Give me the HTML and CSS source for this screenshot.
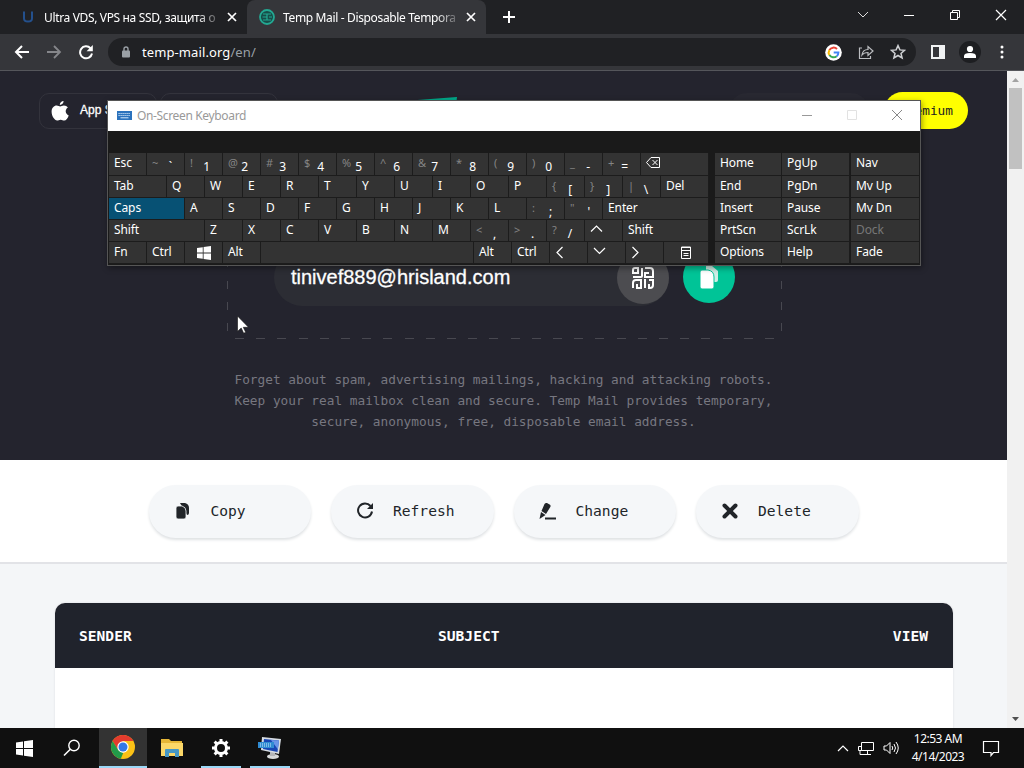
FILE: index.html
```html
<!DOCTYPE html>
<html lang="en">
<head>
	<meta charset="utf-8">
	<title>Temp Mail - Disposable Temporary Email</title>
	<link rel="stylesheet" href="styles.css">
</head>
<body>
	<div class="tabs">
		<div class="tab">
			<svg class="favicon" width="16" height="16" viewBox="0 0 16 16"><path d="M4 2.500v7q0 3 4 3t4-3v-7" fill="none" stroke="#24508c" stroke-width="2"/></svg>
			<span class="tab-title">Ultra VDS, VPS на SSD, защита о</span>
			<svg class="tab-close" width="10" height="10" viewBox="0 0 10 10"><path d="M1 1l8 8M9 1l-8 8" stroke="#fff" stroke-width="1.700"/></svg>
		</div>
		<div class="tab active">
			<svg class="favicon" width="16" height="16" viewBox="0 0 16 16"><circle cx="8" cy="8" r="7" fill="#174d49" stroke="#23a892" stroke-width="1.800"/><path d="M4 5h8M3.500 8H8M4 11h8M8 5v6M10 8h3" stroke="#23a892" stroke-width="1.200"/></svg>
			<span class="tab-title">Temp Mail - Disposable Tempora</span>
			<svg class="tab-close" width="10" height="10" viewBox="0 0 10 10"><path d="M1 1l8 8M9 1l-8 8" stroke="#fff" stroke-width="1.700"/></svg>
		</div>
		<svg class="new-tab" width="12" height="12" viewBox="0 0 12 12"><path d="M6 0v12M0 6h12" stroke="#fff" stroke-width="2"/></svg>
		<div class="window-buttons">
			<svg width="12" height="12" viewBox="0 0 12 12"><path d="M1 3l5 5 5-5" fill="none" stroke="#ddd"/></svg>
			<svg width="12" height="12" viewBox="0 0 12 12"><path d="M1 6.500h10" stroke="#fff"/></svg>
			<svg width="12" height="12" viewBox="0 0 12 12"><path d="M1.500 3.500h7v7h-7zM3.500 3.500v-2h7v7h-2" fill="none" stroke="#fff"/></svg>
			<svg width="12" height="12" viewBox="0 0 12 12"><path d="M1 1l10 10M11 1L1 11" stroke="#fff" stroke-width="1.200"/></svg>
		</div>
	</div>

	<div class="toolbar">
		<svg width="16" height="16" viewBox="0 0 16 16"><path d="M15 8H2M8 2L2 8l6 6" fill="none" stroke="#fff" stroke-width="2"/></svg>
		<svg width="16" height="16" viewBox="0 0 16 16"><path d="M1 8h13M8 2l6 6-6 6" fill="none" stroke="#85868a" stroke-width="1.800"/></svg>
		<svg width="16" height="16" viewBox="0 0 16 16"><path d="M12.500 4.200A6 6 0 1 0 14 9.500" fill="none" stroke="#fff" stroke-width="2"/><path d="M14.800 1v6.200H8.600z" fill="#fff"/></svg>
		<div class="address">
			<svg width="10" height="12" viewBox="0 0 10 12"><path d="M3 5V3a2 2 0 0 1 4 0v2" fill="none" stroke="#9aa0a6" stroke-width="1.400"/><rect x="1" y="4.500" width="8" height="7" rx="1" fill="#9aa0a6"/></svg>
			<span class="url">temp-mail.org<span>/en/</span></span>
			<svg width="17" height="17" viewBox="0 0 17 17"><circle cx="8.500" cy="8.500" r="8.300" fill="#fff"/><g fill="none" stroke-width="2"><path d="M12 5a4.900 4.900 0 0 0-7.600 1" stroke="#ea4335"/><path d="M4.400 6a5 5 0 0 0 0 5" stroke="#fbbc05"/><path d="M4.400 11a4.900 4.900 0 0 0 7.300 1.200" stroke="#34a853"/><path d="M11.700 12.200a4.900 4.900 0 0 0 1.700-3.700H8.700" stroke="#4285f4"/></g></svg>
			<svg width="16" height="16" viewBox="0 0 16 16"><path d="M4 4H1.500v10.500h11V12M4 11c.5-4 2.500-5.500 6-5.500V2.500L15 7l-5 4.500v-3C7.500 8.500 5.500 9 4 11z" fill="none" stroke="#bcbec1" stroke-width="1.200"/></svg>
			<svg width="16" height="16" viewBox="0 0 16 16"><path d="M8 1.600l1.900 4.300 4.600.4-3.500 3.100 1.100 4.600L8 11.500 3.900 14 5 9.400 1.500 6.300l4.600-.4z" fill="none" stroke="#cfd1d4" stroke-width="1.500"/></svg>
		</div>
		<div class="toolbar-right">
			<svg width="14" height="14" viewBox="0 0 14 14"><path d="M1 1h12v12H1z" fill="none" stroke="#f1f3f4" stroke-width="2"/><path d="M8 1h5v12H8z" fill="#f1f3f4"/></svg>
			<svg width="22" height="22" viewBox="0 0 22 22"><circle cx="11" cy="11" r="11" fill="#1d1e21"/><circle cx="11" cy="8" r="3.100" fill="#fff"/><path d="M5 17v-2q0-3 6-3t6 3v2z" fill="#fff"/></svg>
			<svg width="4" height="14" viewBox="0 0 4 14"><g fill="#fff"><circle cx="2" cy="2" r="1.500"/><circle cx="2" cy="7" r="1.500"/><circle cx="2" cy="12" r="1.500"/></g></svg>
		</div>
	</div>

	<div class="viewport">
		<div class="page">
			<div class="hero">
				<div class="site-header">
					<div class="store">
						<svg width="18" height="22" viewBox="0 0 18 22"><path d="M12.600 1c.1 2.200-1.800 4-3.800 3.900C8.600 2.900 10.600 1.100 12.600 1zM9.200 6.400c1 0 2-.9 3.700-.9 1.600 0 3.100.8 4 2.100-3.300 2-2.700 6.500.8 7.800-.9 2.700-2.600 5.200-4.500 5.200-1.400 0-1.900-.8-3.600-.8-1.600 0-2.200.8-3.500.8C3.700 20.600.6 16 .6 11.800c0-3.900 2.500-6.200 5-6.200 1.600 0 2.700.8 3.600.8z" fill="#fff"/></svg>
						<span>App Store</span>
					</div>
					<div class="store"></div>
					<svg class="logo" width="70" height="38" viewBox="0 0 70 38"><path d="M0 9L66 4l-2 18L0 32z" fill="#00a98a"/></svg>
					<div class="language"></div>
					<div class="premium">Premium</div>
				</div>
				<div class="mailbox">
					<div class="email">
						<span>tinivef889@hrisland.com</span>
						<div class="round">
							<svg width="24" height="24" viewBox="0 0 24 24"><path d="M11 2v8q0 1-1 1H2M2 7V4q0-2 2-2h3v5zM14 2h5q3 0 3 3v6h-8V7h4M2 22v-5q0-3 3-3h5v8H6v-4M14 13v9M18 14h4v5q0 3-3 3h-1v-4" fill="none" stroke="#fff" stroke-width="2"/></svg>
						</div>
					</div>
					<div class="round green">
						<svg width="20" height="24" viewBox="0 0 20 24"><path d="M7 1h6l6 5v9q0 2-2 2H7z" fill="#cfeee6"/><path d="M3 5h6q6 1 6 7v10q0 2-2 2H3q-2 0-2-2V7q0-2 2-2z" fill="#fff" stroke="#00c497"/></svg>
					</div>
				</div>
				<p class="intro">Forget about spam, advertising mailings, hacking and attacking robots. Keep your real mailbox clean and secure. Temp Mail provides temporary, secure, anonymous, free, disposable email address.</p>
			</div>

			<div class="actions">
				<div class="action">
					<svg width="18" height="18" viewBox="0 0 18 18"><path d="M6 1h5q4 1 4 5v5q0 2-2 2z" fill="#212529"/><path d="M4 4h4q4 1 4 5v6q0 2-2 2H4q-2 0-2-2V6q0-2 2-2z" fill="#212529" stroke="#f5f8fa" stroke-width=".8"/></svg>
					Copy
				</div>
				<div class="action">
					<svg width="18" height="18" viewBox="0 0 18 18"><path d="M14.500 4A7 7 0 1 0 16 9.500" fill="none" stroke="#212529" stroke-width="2"/><path d="M17 1v6h-6z" fill="#212529"/></svg>
					Refresh
				</div>
				<div class="action">
					<svg width="18" height="18" viewBox="0 0 18 18"><path d="M5.500 2q1-1.500 2.500-1l3 1.700q1 1 .3 2.300L7 12l-4.500-3zM2 10l4.500 3L.500 17z" fill="#212529"/><path d="M6 16.500h11" stroke="#212529" stroke-width="2"/></svg>
					Change
				</div>
				<div class="action">
					<svg width="18" height="18" viewBox="0 0 18 18"><path d="M3.500 3.500l11 11M14.500 3.500l-11 11" stroke="#212529" stroke-width="4" stroke-linecap="round"/></svg>
					Delete
				</div>
			</div>

			<div class="inbox-wrap">
				<div class="inbox">
					<div class="inbox-head"><span>SENDER</span><span>SUBJECT</span><span>VIEW</span></div>
				</div>
			</div>
		</div>
		<div class="scrollbar">
			<svg width="9" height="17" viewBox="0 0 9 17"><path d="M1 11l3.500-4L8 11z" fill="#a3a3a3"/></svg>
			<div class="thumb"></div>
			<svg width="9" height="17" viewBox="0 0 9 17"><path d="M1 6l3.500 4L8 6z" fill="#505050"/></svg>
		</div>
	</div>

	<div class="taskbar">
		<div class="task"><svg width="17" height="17" viewBox="0 0 17 17"><path d="M0 2.500l7-1V8H0zM8 1.300L17 0v8H8zM0 9h7v6.500l-7-1zM8 9h9v8l-9-1.300z" fill="#fff"/></svg></div>
		<div class="task"><svg width="18" height="18" viewBox="0 0 18 18"><circle cx="11" cy="6.500" r="5.200" fill="none" stroke="#fff" stroke-width="1.400"/><path d="M7.300 10.200L1 16.500" stroke="#fff" stroke-width="1.600"/></svg></div>
		<div class="task current"><svg width="24" height="24" viewBox="0 0 24 24"><circle cx="12" cy="12" r="12" fill="#fbc116"/><path d="M1.600 6A12 12 0 0 1 22.400 6H12L7 15z" fill="#e33b2e"/><path d="M1.600 6l5.600 9 5 3-2.400 5.800A12 12 0 0 1 1.600 6z" fill="#229a4a"/><circle cx="12" cy="12" r="5.700" fill="#fff"/><circle cx="12" cy="12" r="4.500" fill="#3478e5"/></svg></div>
		<div class="task"><svg width="22" height="20" viewBox="0 0 22 20"><path d="M0 1h8l2 2h11v15H0z" fill="#e6b637"/><path d="M0 5h22v13H0z" fill="#fbd768"/><path d="M4 19v-7q0-1 1-1h12q1 0 1 1v7h-4v-4H8v4z" fill="#4697c4"/></svg></div>
		<div class="task open"><svg width="20" height="20" viewBox="0 0 20 20"><circle cx="10" cy="10" r="5.500" fill="none" stroke="#fff" stroke-width="3"/><path d="M10 1v3M10 16v3M1 10h3M16 10h3M3.600 3.600l2.200 2.200M14.200 14.200l2.200 2.200M3.600 16.400l2.200-2.200M14.200 5.800l2.200-2.200" stroke="#fff" stroke-width="3"/></svg></div>
		<div class="task open"><svg width="26" height="24" viewBox="0 0 26 24"><ellipse cx="16" cy="20.500" rx="6" ry="2.500" fill="#d7d9da"/><path d="M13 16h5v4h-5z" fill="#b3b5b8"/><path d="M5 1l19 2-2 15L4 14z" fill="#d6dce3"/><path d="M7 3l15 1.500-1.500 11.500L6 13z" fill="#1846b4"/><path d="M14 4l8 .5-1 9z" fill="#6a95e8"/><path d="M1 6h16v6H1z" fill="#2f8bd2"/><path d="M3 8h12M3 10h12" stroke="#cce8fa" stroke-dasharray="1 1"/></svg></div>
		<div class="tray">
			<svg width="12" height="12" viewBox="0 0 12 12"><path d="M1 9l5-5 5 5" fill="none" stroke="#fff" stroke-width="1.200"/></svg>
			<svg width="18" height="16" viewBox="0 0 18 16"><path d="M4.500 2.500h12v8h-12zM7 14.500h7M10.500 10.500v4M1.500 6.500h3v4h-3zM3 10.500v4h5" fill="none" stroke="#fff"/></svg>
			<svg width="16" height="16" viewBox="0 0 16 16"><path d="M1 6h2.500L7 2.500v11L3.500 10H1z" fill="none" stroke="#fff"/><path d="M9 6q1.500 2 0 4M11 4q3 4 0 8M13 2q4.500 6 0 12" fill="none" stroke="#fff"/></svg>
			<div class="clock">12:53 AM<br>4/14/2023</div>
			<svg width="18" height="18" viewBox="0 0 18 18"><path d="M1.500 2.500h15v11h-5l-2.500 3v-3H1.500z" fill="none" stroke="#fff" stroke-width="1.200"/></svg>
		</div>
	</div>

	<div class="osk">
		<div class="osk-title">
			<svg width="15" height="9" viewBox="0 0 15 9"><path d="M0 0h15v9H0z" fill="#2c73bd"/><path d="M1.500 2.500h12M1.500 4.500h12" stroke="#d4e8fa" stroke-dasharray="1.200 .8"/><path d="M3.500 6.800h8" stroke="#d4e8fa"/></svg>
			<span>On-Screen Keyboard</span>
			<svg width="12" height="12" viewBox="0 0 12 12"><path d="M1 6.500h10" stroke="#999"/></svg>
			<svg width="12" height="12" viewBox="0 0 12 12"><path d="M1.500 1.500h9v9h-9z" fill="none" stroke="#e2e2e2"/></svg>
			<svg width="12" height="12" viewBox="0 0 12 12"><path d="M1 1l10 10M11 1L1 11" stroke="#888"/></svg>
		</div>
		<div class="osk-body">
			<div class="keys">
				<div class="row row1">
					<div class="key">Esc</div>
					<div class="key two"><i>~</i><b>`</b></div>
					<div class="key two"><i>!</i><b>1</b></div>
					<div class="key two"><i>@</i><b>2</b></div>
					<div class="key two"><i>#</i><b>3</b></div>
					<div class="key two"><i>$</i><b>4</b></div>
					<div class="key two"><i>%</i><b>5</b></div>
					<div class="key two"><i>^</i><b>6</b></div>
					<div class="key two"><i>&amp;</i><b>7</b></div>
					<div class="key two"><i>*</i><b>8</b></div>
					<div class="key two"><i>(</i><b>9</b></div>
					<div class="key two"><i>)</i><b>0</b></div>
					<div class="key two"><i>_</i><b>-</b></div>
					<div class="key two"><i>+</i><b>=</b></div>
					<div class="key"><svg width="14" height="11" viewBox="0 0 14 11"><path d="M5 .500h8.500v10H5l-4.500-5zM6.500 3l5 5M11.500 3l-5 5" fill="none" stroke="#fff"/></svg></div>
				</div>
				<div class="row row2">
					<div class="key">Tab</div>
					<div class="key">Q</div><div class="key">W</div><div class="key">E</div><div class="key">R</div><div class="key">T</div>
					<div class="key">Y</div><div class="key">U</div><div class="key">I</div><div class="key">O</div><div class="key">P</div>
					<div class="key two"><i>{</i><b>[</b></div>
					<div class="key two"><i>}</i><b>]</b></div>
					<div class="key two"><i>|</i><b>\</b></div>
					<div class="key">Del</div>
				</div>
				<div class="row row3">
					<div class="key pressed">Caps</div>
					<div class="key">A</div><div class="key">S</div><div class="key">D</div><div class="key">F</div><div class="key">G</div>
					<div class="key">H</div><div class="key">J</div><div class="key">K</div><div class="key">L</div>
					<div class="key two"><i>:</i><b>;</b></div>
					<div class="key two"><i>"</i><b>'</b></div>
					<div class="key">Enter</div>
				</div>
				<div class="row row4">
					<div class="key">Shift</div>
					<div class="key">Z</div><div class="key">X</div><div class="key">C</div><div class="key">V</div><div class="key">B</div>
					<div class="key">N</div><div class="key">M</div>
					<div class="key two"><i>&lt;</i><b>,</b></div>
					<div class="key two"><i>&gt;</i><b>.</b></div>
					<div class="key two"><i>?</i><b>/</b></div>
					<div class="key"><svg width="13" height="11" viewBox="0 0 13 11"><path d="M1 7.500l5.500-5.500L12 7.500" fill="none" stroke="#fff" stroke-width="1.200"/></svg></div>
					<div class="key">Shift</div>
				</div>
				<div class="row row5">
					<div class="key">Fn</div>
					<div class="key">Ctrl</div>
					<div class="key center"><svg width="14" height="14" viewBox="0 0 17 17"><path d="M0 2.500l7-1V8H0zM8 1.300L17 0v8H8zM0 9h7v6.500l-7-1zM8 9h9v8l-9-1.300z" fill="#fff"/></svg></div>
					<div class="key">Alt</div>
					<div class="key"></div>
					<div class="key">Alt</div>
					<div class="key">Ctrl</div>
					<div class="key"><svg width="13" height="13" viewBox="0 0 13 13"><path d="M7.500 1L2 6.500 7.500 12" fill="none" stroke="#fff" stroke-width="1.200"/></svg></div>
					<div class="key"><svg width="13" height="11" viewBox="0 0 13 11"><path d="M1 2l5.500 5.500L12 2" fill="none" stroke="#fff" stroke-width="1.200"/></svg></div>
					<div class="key"><svg width="13" height="13" viewBox="0 0 13 13"><path d="M1.500 1L7 6.500 1.500 12" fill="none" stroke="#fff" stroke-width="1.200"/></svg></div>
					<div class="key center"><svg width="10" height="13" viewBox="0 0 10 13"><path d="M.500 1v11.500h9V1zM0 1.500h10M0 4.500h10M2.500 7.500h5M2.500 9.500h5" fill="none" stroke="#fff"/></svg></div>
				</div>
			</div>
			<div class="side">
				<div class="key">Home</div><div class="key">PgUp</div><div class="key">Nav</div>
				<div class="key">End</div><div class="key">PgDn</div><div class="key">Mv Up</div>
				<div class="key">Insert</div><div class="key">Pause</div><div class="key">Mv Dn</div>
				<div class="key">PrtScn</div><div class="key">ScrLk</div><div class="key off">Dock</div>
				<div class="key">Options</div><div class="key">Help</div><div class="key">Fade</div>
			</div>
		</div>
	</div>

	<svg class="cursor" width="12" height="19" viewBox="0 0 12 19"><path d="M.500 1v15.500l3.700-3.500 2.500 5.300 2-1-2.400-5h5.200z" fill="#fff" stroke="#111" stroke-width=".6"/></svg>
</body>
</html>
```
FILE: styles.css
```css
* {
	box-sizing: border-box;
}
body {
	margin: 0;
	width: 1024px;
	height: 768px;
	overflow: hidden;
	display: flex;
	flex-direction: column;
	position: relative;
	background: #202124;
	color: #fff;
	font-family: "Noto Sans", sans-serif;
	font-size: 12px;
}
svg {
	display: block;
	flex: none;
}

/* browser */
.tabs {
	height: 34px;
	display: flex;
	align-items: center;
	padding-left: 8px;
}
.tab {
	width: 239px;
	height: 34px;
	display: flex;
	align-items: center;
	padding: 0 10px 0 12px;
}
.tab.active {
	background: #35363a;
	border-radius: 8px 8px 0 0;
}
.tab-title {
	flex: 1;
	margin: 0 9px 0 8px;
	white-space: nowrap;
	letter-spacing: -0.35px;
	-webkit-mask-image: linear-gradient(90deg, #000 88%, rgba(0, 0, 0, 0.2));
	mask-image: linear-gradient(90deg, #000 88%, rgba(0, 0, 0, 0.2));
}
.new-tab {
	margin-left: 17px;
}
.window-buttons {
	display: flex;
	gap: 34px;
	margin: -5px 17px 0 auto;
}
.toolbar {
	height: 37px;
	display: flex;
	align-items: center;
	gap: 16px;
	padding: 0 20px 0 14px;
	background: #35363a;
	border-bottom: 1px solid #55565b;
}
.address {
	width: 808px;
	height: 28px;
	flex: none;
	margin-left: -2px;
	display: flex;
	align-items: center;
	gap: 16px;
	padding: 0 10px 0 13px;
	border-radius: 14px;
	background: #202124;
}
.toolbar-right {
	display: flex;
	align-items: center;
	gap: 14px;
	margin-left: -1px;
}
.toolbar-right svg:last-child {
	margin-left: 5px;
}
.url {
	flex: 1;
	margin-left: -5px;
	font-size: 13px;
	letter-spacing: 0.1px;
}
.url span {
	color: #9aa0a6;
}
.viewport {
	height: 657px;
	display: flex;
}
.page {
	width: 1007px;
	background: #f4f6f8;
	overflow: hidden;
}
.scrollbar {
	width: 17px;
	display: flex;
	flex-direction: column;
	align-items: center;
	background: #f1f1f1;
}
.thumb {
	width: 13px;
	height: 81px;
	margin-bottom: auto;
	background: #c1c1c1;
}

/* hero */
.hero {
	height: 389px;
	background: #24242e;
}
.site-header {
	display: flex;
	align-items: flex-start;
	padding: 22px 39px 0;
}
.store {
	width: 118px;
	height: 36px;
	display: flex;
	align-items: center;
	gap: 11px;
	padding-left: 11px;
	border: 1px solid #33333c;
	border-radius: 10px;
	font-family: "Liberation Sans", sans-serif;
	-webkit-text-stroke: 0.3px #fff;
	white-space: nowrap;
	overflow: hidden;
}
.store span {
	margin-top: -2px;
}
.store + .store {
	margin-left: 3px;
}
.logo {
	margin-left: 113px;
}
.language {
	width: 140px;
	height: 36px;
	margin-left: auto;
	margin-right: 15px;
	border-radius: 18px;
	background: #282831;
}
.premium {
	width: 84px;
	height: 37px;
	margin-top: -1px;
	padding-right: 15px;
	border-radius: 19px;
	background: #ff0;
	color: #222;
	font: 12.800px/37px "DejaVu Sans Mono", monospace;
	text-align: right;
}
.mailbox {
	width: 555px;
	height: 138px;
	margin: 70px 0 0 227px;
	display: flex;
	align-items: flex-start;
	gap: 14px;
	padding: 48px 46px 0 47px;
	background:
		repeating-linear-gradient(90deg, transparent 0 8px, #484850 8px 17px, transparent 17px 21.200px) 0 100% / 100% 1px no-repeat,
		repeating-linear-gradient(0deg, transparent 0 8px, #484850 8px 16px, transparent 16px 21.200px) 0 0 / 1px 100% no-repeat,
		repeating-linear-gradient(0deg, transparent 0 8px, #484850 8px 16px, transparent 16px 21.200px) 100% 0 / 1px 100% no-repeat;
}
.email {
	width: 395px;
	height: 57px;
	display: flex;
	align-items: center;
	justify-content: space-between;
	padding-left: 17px;
	border-radius: 29px;
	background: #2c2d34;
	font: 20px "Liberation Sans", sans-serif;
	-webkit-text-stroke: 0.3px #fff;
}
.round {
	width: 52px;
	height: 52px;
	flex: none;
	display: flex;
	align-items: center;
	justify-content: center;
	border-radius: 50%;
	background: #4c4c50;
}
.round.green {
	margin-top: 2px;
	background: #00c497;
}
.intro {
	width: 560px;
	margin: 30px auto 0;
	color: #777780;
	font: 12.780px/21px "DejaVu Sans Mono", monospace;
	text-align: center;
}

/* actions */
.actions {
	height: 104px;
	display: flex;
	justify-content: center;
	gap: 20px;
	padding-top: 25px;
	background: #fff;
	border-bottom: 2px solid #e2e3e7;
}
.action {
	width: 162.500px;
	height: 53px;
	display: flex;
	align-items: center;
	gap: 19px;
	padding: 0 0 2px 25px;
	border-radius: 27px;
	background: #f5f7f9;
	box-shadow: 0 2px 3px #dfe2e4;
	color: #212529;
	font: 14.600px "DejaVu Sans Mono", monospace;
}
.inbox-wrap {
	padding: 39px 54px 0 55px;
}
.inbox {
	height: 140px;
	background: #fff;
	border-radius: 10px 10px 0 0;
	box-shadow: 0 0 2px #d5d7db;
}
.inbox-head {
	height: 65px;
	display: grid;
	grid-template-columns: 359px 1fr auto;
	align-items: center;
	padding: 0 25px 0 24px;
	border-radius: 10px 10px 0 0;
	background: #20232c;
	font: bold 14.600px "DejaVu Sans Mono", monospace;
}

/* taskbar */
.taskbar {
	height: 40px;
	display: flex;
	align-items: center;
	background: #101010;
}
.task {
	width: 48px;
	height: 40px;
	display: flex;
	align-items: center;
	justify-content: center;
}
.task:nth-child(n+3) {
	margin-left: 1px;
}
.task.current {
	margin-left: 3px;
	background: #333;
	border-bottom: 2px solid #9bd8f7;
}
.task.open {
	background: linear-gradient(#9bd8f7, #9bd8f7) 50% 100% / 40px 2px no-repeat;
}
.tray {
	display: flex;
	align-items: center;
	gap: 8px;
	margin-left: auto;
	padding-right: 24px;
}
.clock {
	width: 58px;
	margin: 0 7px 0 2px;
	line-height: 18px;
	letter-spacing: -0.5px;
	text-align: center;
	white-space: nowrap;
}

/* on-screen keyboard window */
.osk {
	position: absolute;
	left: 107px;
	top: 100px;
	width: 814px;
	height: 166px;
	border: 1px solid #555;
	background: #1a1a1a;
	box-shadow: 1px 2px 6px rgba(0, 0, 0, 0.4);
}
.osk-title {
	height: 30px;
	display: flex;
	align-items: center;
	gap: 33px;
	padding: 0 17px 2px 9px;
	background: #fff;
	color: #999;
}
.osk-title span {
	margin: 0 auto 0 -28px;
	letter-spacing: -0.35px;
}
.osk-body {
	display: flex;
	gap: 6px;
	padding: 22px 0 0 1px;
}
.keys {
	width: 600px;
}
.row {
	display: grid;
	height: 22px;
}
.row1 {
	height: 23px;
	grid-template-columns: repeat(14, 38px) 1fr;
}
.row2 {
	grid-template-columns: 58px repeat(13, 38px) 1fr;
}
.row3 {
	grid-template-columns: 76px repeat(11, 38px) 1fr;
}
.row4 {
	grid-template-columns: 96px repeat(11, 38px) 1fr;
}
.row5 {
	grid-template-columns: repeat(4, 38px) 213px repeat(5, 38px) 1fr;
}
.key {
	padding: 2px 0 0 5px;
	border: solid #1c1c1c;
	border-width: 0 1px 1px 0;
	background: #333;
	line-height: 16px;
	letter-spacing: -0.1px;
	white-space: nowrap;
	overflow: hidden;
}
.key svg {
	margin-top: 2px;
}
.key.center {
	display: flex;
	justify-content: center;
	padding-left: 0;
}
.key.pressed {
	background: #075174;
}
.key.off {
	color: #777;
}
.two {
	display: flex;
	justify-content: space-between;
	padding-right: 12px;
}
.two i {
	color: #858585;
	font-size: 11px;
	font-style: normal;
}
.two b {
	padding-top: 4px;
	font-weight: normal;
}
.side {
	flex: 1;
	display: grid;
	grid-template-columns: 67px 67px 1fr;
	grid-template-rows: 23px repeat(4, 22px);
}
.side .key:nth-child(3n+2) {
	margin-right: -1px;
}
.side .key:nth-child(3n) {
	margin-left: 2px;
}
.cursor {
	position: absolute;
	left: 237px;
	top: 315px;
}
```
